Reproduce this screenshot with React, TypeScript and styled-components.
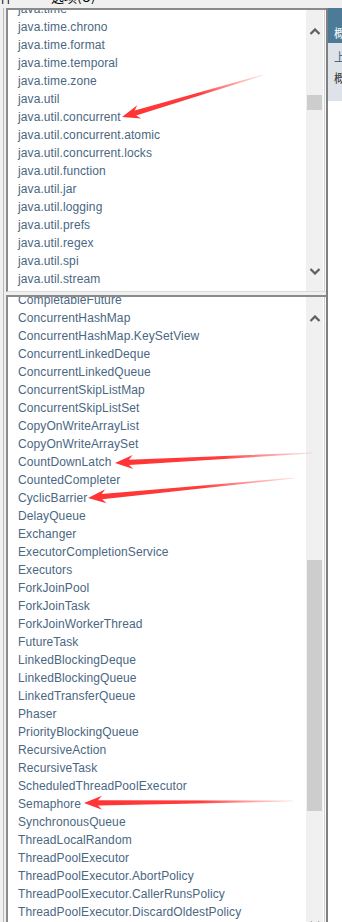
import React from 'react';
import styled, { createGlobalStyle } from 'styled-components';

const packages = [
  'java.time',
  'java.time.chrono',
  'java.time.format',
  'java.time.temporal',
  'java.time.zone',
  'java.util',
  'java.util.concurrent',
  'java.util.concurrent.atomic',
  'java.util.concurrent.locks',
  'java.util.function',
  'java.util.jar',
  'java.util.logging',
  'java.util.prefs',
  'java.util.regex',
  'java.util.spi',
  'java.util.stream',
];

const classes = [
  'CompletableFuture',
  'ConcurrentHashMap',
  'ConcurrentHashMap.KeySetView',
  'ConcurrentLinkedDeque',
  'ConcurrentLinkedQueue',
  'ConcurrentSkipListMap',
  'ConcurrentSkipListSet',
  'CopyOnWriteArrayList',
  'CopyOnWriteArraySet',
  'CountDownLatch',
  'CountedCompleter',
  'CyclicBarrier',
  'DelayQueue',
  'Exchanger',
  'ExecutorCompletionService',
  'Executors',
  'ForkJoinPool',
  'ForkJoinTask',
  'ForkJoinWorkerThread',
  'FutureTask',
  'LinkedBlockingDeque',
  'LinkedBlockingQueue',
  'LinkedTransferQueue',
  'Phaser',
  'PriorityBlockingQueue',
  'RecursiveAction',
  'RecursiveTask',
  'ScheduledThreadPoolExecutor',
  'Semaphore',
  'SynchronousQueue',
  'ThreadLocalRandom',
  'ThreadPoolExecutor',
  'ThreadPoolExecutor.AbortPolicy',
  'ThreadPoolExecutor.CallerRunsPolicy',
  'ThreadPoolExecutor.DiscardOldestPolicy',
];

// annotation arrows: tail -> tip
const arrows = [
  { from: [263, 75], to: [122, 117] },
  { from: [312, 453], to: [115, 463] },
  { from: [295, 478], to: [88, 498] },
  { from: [293, 801], to: [84, 803] },
];

const GlobalStyle = createGlobalStyle`
  html, body {
    margin: 0;
    padding: 0;
    background: #f0f0f0;
  }
  * {
    box-sizing: border-box;
  }
`;

function Chevron({ down }: { down?: boolean }) {
  return (
    <svg width="12" height="7" viewBox="0 0 12 7">
      <path
        d={down ? 'M1.5 1 L6 5.5 L10.5 1' : 'M1.5 6 L6 1.5 L10.5 6'}
        fill="none"
        stroke="#606060"
        strokeWidth="2.3"
      />
    </svg>
  );
}

interface IScrollBarProps {
  thumbOffset: number;
  thumbSize: number;
}

function ScrollBar({ thumbOffset, thumbSize }: IScrollBarProps) {
  return (
    <Bar>
      <ArrowButton>
        <Chevron />
      </ArrowButton>
      <Track>
        <Thumb $offset={thumbOffset} $size={thumbSize} />
      </Track>
      <ArrowButton>
        <Chevron down />
      </ArrowButton>
    </Bar>
  );
}

function Arrow({ from, to, id }: { from: number[]; to: number[]; id: string }) {
  const dx = from[0] - to[0];
  const dy = from[1] - to[1];
  const len = Math.hypot(dx, dy);
  const ux = dx / len;
  const uy = dy / len;
  const px = -uy;
  const py = ux;
  const pt = (u: number, v: number) => `${to[0] + ux * u + px * v},${to[1] + uy * u + py * v}`;
  const points = [
    pt(0, 0),
    pt(18, 7),
    pt(14, 2.6),
    pt(len, 0.4),
    pt(len, -0.4),
    pt(14, -2.6),
    pt(18, -7),
  ].join(' ');
  return (
    <g>
      <defs>
        <linearGradient id={id} gradientUnits="userSpaceOnUse" x1={to[0]} y1={to[1]} x2={from[0]} y2={from[1]}>
          <stop offset="0" stopColor="#ff3434" />
          <stop offset="0.55" stopColor="#ff3c3c" />
          <stop offset="1" stopColor="#ff5a5a" stopOpacity="0.15" />
        </linearGradient>
      </defs>
      <polygon points={points} fill={`url(#${id})`} />
    </g>
  );
}

export default function App() {
  return (
    <Page>
      <GlobalStyle />
      <MenuBar>
        <MenuItem $shift={-13}>文件</MenuItem>
        <MenuItem $shift={38}>选项(O)</MenuItem>
      </MenuBar>
      <Main>
        <LeftPane>
          <TopPanel>
            <ListArea>
              <List $offset={-10}>
                {packages.map((p) => (
                  <Item key={p}>{p}</Item>
                ))}
              </List>
            </ListArea>
            <ScrollBar thumbOffset={55} thumbSize={15} />
            <PanelEdge />
          </TopPanel>
          <BottomPanel>
            <ListArea>
              <List $offset={-6}>
                {classes.map((c) => (
                  <Item key={c}>{c}</Item>
                ))}
              </List>
            </ListArea>
            <ScrollBar thumbOffset={233} thumbSize={251} />
            <PanelEdge />
          </BottomPanel>
        </LeftPane>
        <Divider />
        <RightPane>
          <NavHeader>概</NavHeader>
          <SubNav>
            <SubLink>上</SubLink>
            <SubText>概</SubText>
          </SubNav>
        </RightPane>
      </Main>
      <Overlay width="342" height="922">
        {arrows.map((a, i) => (
          <Arrow key={i} id={`arrow-grad-${i}`} from={a.from} to={a.to} />
        ))}
      </Overlay>
    </Page>
  );
}

const Page = styled.div`
  position: relative;
  width: 342px;
  height: 922px;
  overflow: hidden;
  background: #f0f0f0;
  font-family: 'Liberation Sans', Arial, 'Noto Sans CJK SC', sans-serif;
`;

const MenuBar = styled.div`
  height: 8px;
  display: flex;
  overflow: hidden;
  background: #f0f0f0;
`;

const MenuItem = styled.span<{ $shift: number }>`
  margin-left: ${(p) => p.$shift}px;
  margin-top: -12px;
  line-height: 17px;
  font-size: 13px;
  color: #000;
  font-family: 'Noto Sans CJK SC', 'Liberation Sans', sans-serif;
  white-space: nowrap;
`;

const Main = styled.div`
  display: flex;
  height: 914px;
`;

const LeftPane = styled.div`
  width: 323px;
  flex-shrink: 0;
  margin-left: 3px;
  padding-left: 2px;
  border-left: 1px solid #b9b9b9;
  display: flex;
  flex-direction: column;
  overflow: hidden;
`;

const PanelBase = styled.div`
  display: flex;
  flex-shrink: 0;
  background: #fff;
  border-left: 2px solid #8a8a8a;
  border-top: 2px solid #8a8a8a;
  overflow: hidden;
`;

const TopPanel = styled(PanelBase)`
  height: 284px;
  border-bottom: 1px solid #dadada;
  margin-bottom: 3px;
`;

const BottomPanel = styled(PanelBase)`
  height: 649px;
`;

const ListArea = styled.div`
  flex: 1;
  overflow: hidden;
  padding-left: 10px;
`;

const List = styled.div<{ $offset: number }>`
  margin-top: ${(p) => p.$offset}px;
  display: flex;
  flex-direction: column;
`;

const Item = styled.div`
  height: 18px;
  flex-shrink: 0;
  line-height: 18px;
  font-size: 12px;
  letter-spacing: 0.1px;
  color: #4a6782;
  white-space: nowrap;
`;

const Bar = styled.div`
  width: 17px;
  flex-shrink: 0;
  background: #f0f0f0;
  display: flex;
  flex-direction: column;
  padding: 13px 0 11px;
`;

const ArrowButton = styled.div`
  height: 17px;
  flex-shrink: 0;
  display: flex;
  align-items: center;
  justify-content: center;
`;

const Track = styled.div`
  flex: 1;
  display: flex;
  flex-direction: column;
  padding: 0 1px;
`;

const Thumb = styled.div<{ $offset: number; $size: number }>`
  margin-top: ${(p) => p.$offset}px;
  height: ${(p) => p.$size}px;
  flex-shrink: 0;
  background: #cdcdcd;
`;

const PanelEdge = styled.div`
  width: 3px;
  flex-shrink: 0;
  background: #f8f8f8;
  border-left: 1px solid #fdfdfd;
  border-right: 1px solid #fafafa;
  box-shadow: inset 1px 0 0 #cfcfcf;
`;

const Divider = styled.div`
  width: 2px;
  flex-shrink: 0;
  background: #7f7f7f;
`;

const RightPane = styled.div`
  flex: 1;
  background: #fff;
  display: flex;
  flex-direction: column;
  font-family: 'Noto Sans CJK SC', 'Liberation Sans', sans-serif;
  font-size: 12px;
  overflow: hidden;
`;

const NavHeader = styled.div`
  height: 35px;
  flex-shrink: 0;
  background: #4d7a97;
  color: #fff;
  padding: 17px 0 0 6px;
  line-height: 16px;
`;

const SubNav = styled.div`
  height: 58px;
  flex-shrink: 0;
  background: #dee3e9;
  padding: 6px 0 0 6px;
  display: flex;
  flex-direction: column;
  gap: 5px;
  line-height: 16px;
`;

const SubLink = styled.span`
  color: #4a6782;
`;

const SubText = styled.span`
  color: #353833;
`;

const Overlay = styled.svg`
  position: absolute;
  left: 0;
  top: 0;
  pointer-events: none;
`;
